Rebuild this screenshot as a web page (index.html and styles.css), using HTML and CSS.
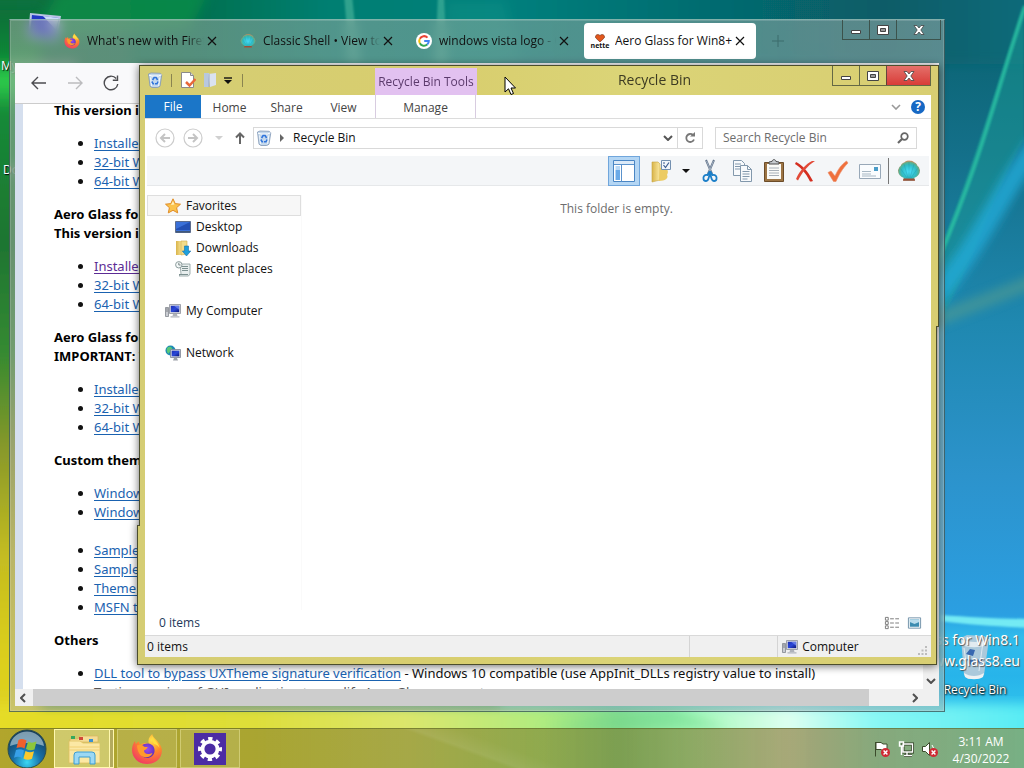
FILE: index.html
```html
<!DOCTYPE html>
<html lang="en">
<head>
<meta charset="utf-8">
<title>Desktop</title>
<link rel="stylesheet" href="styles.css">
</head>
<body>
<svg class="defs" aria-hidden="true">
  <defs>
    <linearGradient id="monBlue" x1="0" y1="0" x2="1" y2="1"><stop offset="0" stop-color="#1c2fb4"/><stop offset=".5" stop-color="#2b48d8"/><stop offset="1" stop-color="#0a1478"/></linearGradient>
    <linearGradient id="gold" x1="0" y1="0" x2="1" y2="0"><stop offset="0" stop-color="#d9b44a"/><stop offset="1" stop-color="#fbe9a0"/></linearGradient>
    <radialGradient id="fox" cx=".65" cy=".2" r=".9"><stop offset="0" stop-color="#ffe14a"/><stop offset=".45" stop-color="#ff8a2a"/><stop offset="1" stop-color="#f0306a"/></radialGradient>
    <radialGradient id="foxIn" cx=".5" cy=".4" r=".6"><stop offset="0" stop-color="#9a4cf0"/><stop offset="1" stop-color="#5a2fb8"/></radialGradient>
    <radialGradient id="shellG" cx=".5" cy=".55" r=".56"><stop offset="0" stop-color="#4ae0fa"/><stop offset=".6" stop-color="#30bcc4"/><stop offset=".8" stop-color="#5ab090"/><stop offset="1" stop-color="#f0804c"/></radialGradient>
    <symbol id="bin" viewBox="0 0 16 16"><path d="M1.500 2 4 1l9 .3 1.800 1.400-1.800 11.500-2.200 1.300H5l-2-1.300z" fill="#c4d8ec" stroke="#7f96b4" stroke-width=".8"/><path d="M2 3.200 5 4h6.500l3-1.200" fill="none" stroke="#fff"/><path d="M3.500 5.500 4.600 14M12.800 5.500 11.600 14" stroke="#f2f7fc" fill="none"/><path d="m5.600 8 1.500-2.500h2L10.600 8M11 9.500l-1 2.200H8M4.800 9.500l1.300 2.200h1" fill="none" stroke="#2f74dc" stroke-width="1.500"/></symbol>
    <symbol id="pc" viewBox="0 0 16 16"><path d="M.5 4.500h3v9h-3z" fill="#c9ccd2" stroke="#82868e" stroke-width=".8"/><path d="M1 6h2M1 8h2" stroke="#5c6068" stroke-width=".7"/><path d="M4.500 1.500h11v9h-11z" fill="#d6d8de" stroke="#8d919b" stroke-width=".8"/><path d="M5.800 2.800h8.400v6.300H5.800z" fill="url(#monBlue)"/><path d="m9 2.800 5.200 0v4z" fill="#7c92f0" opacity=".7"/><path d="M8 11h4l.5 2h-5zM5.500 13.200h9v1.300h-9z" fill="#aeb2ba"/></symbol>
    <symbol id="firefox" viewBox="0 0 32 32"><path d="M16 31C7.500 31 1 24.800 1 17c0-3.600 1.200-6.600 3-9l.8 3.200C6 9.400 7.200 8.600 8.200 8.200c-.2 1.800.4 2.800 1.200 3.400C12 10 16 9.500 18 11c-2-4.500 1.500-8.500 3.200-10C21.500 5 29 8.500 30.500 15 32.500 23 26 31 16 31z" fill="url(#fox)"/><path d="M9 17c0-4 4-7 8-6.400C22 11 24 15 23.500 18.500 23 22.500 19.500 25 16 25s-7-3-7-8z" fill="url(#foxIn)"/><path d="M6 12.500c3-1.300 6-.5 7 1.200 1 .2 2.500.1 3.700.3-.5 2-2.500 2.700-3.700 3.500 0 2 1.500 3.500 4 3.500 2 0 3-1.200 4.500-.7-1.500 3.200-5 4.700-8.500 3.700-4-1-6.500-5-7-11.500z" fill="#ff9a2c"/><path d="M21 3c1.500 4 6.500 6 7.500 12-1.700-3-4.200-4-5.500-4-1.600-2.500-2.500-5-2-8z" fill="#ffdf3e"/></symbol>
    <symbol id="shell" viewBox="0 0 24 24"><path d="M6 21.500 7 19C3 17.500.8 14.500 1 11c1-1 .8-3.500 2.700-4C4.500 4 7 4 8 2.800c2-1.300 3-.8 4-1.300 1 .5 3 0 4.500 1.300C18 4 20 4.500 20.500 7c2 .6 1.700 3 2.500 4 .2 3.500-2 6.500-6 8l1 2.500z" fill="url(#shellG)"/><path d="M12 19V3M11 19 7 5M13 19l4-14M10 19 3.500 9.500M14 19l6.500-9.500" stroke="#1c7f98" stroke-width=".6" opacity=".45" fill="none"/><path d="M6.500 19.500h11l.5 2.200H6z" fill="#9a4f38"/></symbol>
    <symbol id="glyphMin" viewBox="0 0 14 14"><path d="M2.500 7.500h9v3h-9z" fill="#fff" stroke="#444"/></symbol>
    <symbol id="glyphMax" viewBox="0 0 14 14"><path d="M1.500 2.500h11v9h-11z" fill="#fff" stroke="#444"/><path d="M4.500 5.500h5v3h-5z" fill="#999" stroke="#444"/></symbol>
    <symbol id="glyphX" viewBox="0 0 14 14"><path d="M2 2.500h3L7 5l2-2.500h3L8.800 7l3.200 4.500H9L7 9l-2 2.500H2L5.200 7z" fill="#fff" stroke="#444" stroke-width=".8"/></symbol>
    <symbol id="tabX" viewBox="0 0 10 10"><path d="m1 1 8 8M9 1 1 9" stroke="currentColor" stroke-width="1.200"/></symbol>
    <symbol id="err" viewBox="0 0 8 8"><circle cx="4" cy="4" r="4" fill="#cf2a34"/><path d="m2.300 2.300 3.400 3.400m0-3.400L2.300 5.700" stroke="#fff" stroke-width="1.300"/></symbol>
  </defs>
</svg>

<svg class="wallpaper" viewBox="0 0 1024 768" preserveAspectRatio="none" aria-hidden="true">
  <defs>
    <linearGradient id="top" x1="0" x2="1" y1="0" y2="0"><stop offset="0" stop-color="#0f713b"/><stop offset=".2" stop-color="#03704f"/><stop offset=".33" stop-color="#047f72"/><stop offset=".5" stop-color="#057f7c"/><stop offset=".68" stop-color="#066c70"/><stop offset=".85" stop-color="#075c67"/><stop offset="1" stop-color="#0a6c7c"/></linearGradient>
    <linearGradient id="left" x1="0" x2="0" y1="0" y2="1"><stop offset="0" stop-color="#106e38"/><stop offset=".06" stop-color="#0c8836"/><stop offset=".09" stop-color="#2fd04c"/><stop offset=".13" stop-color="#158a38"/><stop offset=".3" stop-color="#1e7530"/><stop offset=".44" stop-color="#358a30"/><stop offset=".56" stop-color="#87982a"/><stop offset=".7" stop-color="#c4bc20"/><stop offset=".83" stop-color="#dccf1c"/><stop offset="1" stop-color="#e2d52a"/></linearGradient>
    <linearGradient id="right" x1="0" x2="0" y1="0" y2="1"><stop offset="0" stop-color="#08606c"/><stop offset=".2" stop-color="#14708a"/><stop offset=".42" stop-color="#1f88b0"/><stop offset=".62" stop-color="#2c93cc"/><stop offset=".8" stop-color="#2b9fe2"/><stop offset=".83" stop-color="#30bcec"/><stop offset=".88" stop-color="#27b4ea"/><stop offset="1" stop-color="#40dcf0"/></linearGradient>
    <linearGradient id="bottom" x1="0" x2="1" y1="0" y2="0"><stop offset="0" stop-color="#e6dc24"/><stop offset=".25" stop-color="#dede38"/><stop offset=".4" stop-color="#dbe66c"/><stop offset=".53" stop-color="#b0ec80"/><stop offset=".6" stop-color="#84dc8c"/><stop offset=".66" stop-color="#a0f8b4"/><stop offset=".76" stop-color="#ddfff0"/><stop offset=".84" stop-color="#8af8f4"/><stop offset="1" stop-color="#52eaf4"/></linearGradient>
    <filter id="soft"><feGaussianBlur stdDeviation="6"/></filter>
    <filter id="soft2"><feGaussianBlur stdDeviation="1"/></filter>
    <filter id="soft8" x="-50%" y="-50%" width="200%" height="200%"><feGaussianBlur stdDeviation="5"/></filter>
  </defs>
  <path fill="url(#top)" d="M0 0h1024v768H0z"/>
  <path fill="url(#right)" d="M930 0h94v768H500V60h430z"/>
  <path fill="url(#top)" d="M-20-20h1064v84H-20z" filter="url(#soft)"/>
  <path fill="url(#left)" d="M-20 10H40v780h-60z" filter="url(#soft)"/>
  <path d="M60-10 210-10 190 30 30 40z" fill="#079746" opacity=".6" filter="url(#soft)"/>
  <path d="M344-5h8l7 70h-9zM438-5h6l3 70h-12z" fill="#59c0a4" opacity=".55" filter="url(#soft2)"/>
  <path d="M445 0h60l15 64h-70z" fill="#15998c" opacity=".35" filter="url(#soft)"/>
  <path d="M1024 8C995 90 975 160 940 250v70c30-50 55-130 84-180z" fill="#1c9e96" opacity=".45" filter="url(#soft2)"/>
  <path d="M1025 6C995 95 985 150 935 268" fill="none" stroke="#2cc4a4" stroke-width="4" opacity=".8" filter="url(#soft2)"/>
  <path d="M1040 140C1000 190 985 240 925 310" fill="none" stroke="#20aad8" stroke-width="20" opacity=".8" filter="url(#soft8)"/>
  <path d="M1050 275 915 328" fill="none" stroke="#5ca08c" stroke-width="14" opacity=".5" filter="url(#soft8)"/>
  <path d="M940 615c30 2 55 4 90 4v9c-35-2-60-3-90-7z" fill="#7cf2f6" opacity=".9" filter="url(#soft2)"/>
  <path fill="url(#bottom)" d="M-20 704h1064v80H-20z" filter="url(#soft)"/>
  <path d="m540 728 130-20 60 20z" fill="#6cd48c" opacity=".5" filter="url(#soft)"/>
</svg>

<div class="desktop">
  <svg class="desk-pc" viewBox="0 0 36 30" aria-hidden="true"><path d="M3 1 34 4 30 28 1 25z" fill="#b9c4e4"/><path d="M5 3 32 6 28 26 3 23z" fill="#2237c4"/><path d="m16 4 16 2-3 12z" fill="#c9dcf8"/></svg>
  <span class="desk-label label-m">My Computer</span>
  <span class="desk-label label-d">Documents</span>
  <div class="desk-bin">
    <svg viewBox="0 0 32 46" aria-hidden="true"><path d="M2 4 8 1l17 1 5 3-5 36-7 4H9l-4-4z" fill="#b9cbd9" opacity=".9"/><path d="M2 5c8 4 20 4 28 0l-2 6C20 14 10 14 3 11z" fill="#e8eef2" opacity=".9"/><path d="m7 20 4-5 5 1-2 6zM8 25l6 1 2 6-6-2zM18 26l6-2-3 7z" fill="#3768b0"/><path d="M5 39c6 4 14 4 20 0l-1 4c-4 3-14 3-18 0z" fill="#eef2f4"/><path d="M24 8 20 37M5 14l3 22" stroke="#fff" opacity=".6" fill="none"/></svg>
    <span>Recycle Bin</span>
  </div>
  <p class="watermark">Aero Glass for Win8.1<br>www.glass8.eu</p>
</div>

<section class="browser" aria-label="Firefox">
  <header class="tabstrip">
    <div class="tabs">
      <div class="tab"><svg class="fav" viewBox="0 0 32 32"><use href="#firefox"/></svg><span>What's new with Firefox</span><button aria-label="Close tab"><svg><use href="#tabX"/></svg></button></div>
      <div class="tab"><svg class="fav"><use href="#shell"/></svg><span>Classic Shell • View topic</span><button aria-label="Close tab"><svg><use href="#tabX"/></svg></button></div>
      <div class="tab"><svg class="fav" viewBox="0 0 16 16"><circle cx="8" cy="8" r="8" fill="#fff"/><g fill="none" stroke-width="2"><path d="M11.500 4.600A4.800 4.800 0 0 0 3.800 5.700" stroke="#ea4335"/><path d="M3.800 5.700a4.800 4.800 0 0 0 0 4.600" stroke="#fbbc05"/><path d="M3.800 10.300a4.800 4.800 0 0 0 7.400 1.300" stroke="#34a853"/><path d="M11.200 11.600A4.800 4.800 0 0 0 12.800 8H8.200" stroke="#4285f4"/></g></svg><span>windows vista logo - Google</span><button aria-label="Close tab"><svg><use href="#tabX"/></svg></button></div>
      <div class="tab active"><div class="nette"><svg viewBox="0 0 10 8"><path d="M5 8 .8 4C-.5 1.500 2.500-.8 5 1.500 7.500-.8 10.500 1.500 9.200 4z" fill="#e2571c" stroke="#6b2c14" stroke-width=".6"/></svg><b>nette</b></div><span>Aero Glass for Win8+</span><button aria-label="Close tab"><svg><use href="#tabX"/></svg></button></div>
      <button class="newtab" aria-label="New tab"><svg viewBox="0 0 12 12"><path d="M6 0v12M0 6h12" stroke="#3c6c6c"/></svg></button>
    </div>
    <div class="winbtns">
      <button aria-label="Minimize"><svg><use href="#glyphMin"/></svg></button><button aria-label="Maximize"><svg><use href="#glyphMax"/></svg></button><button class="wide" aria-label="Close"><svg><use href="#glyphX"/></svg></button>
    </div>
  </header>
  <div class="client">
    <nav class="navbar">
      <button aria-label="Back"><svg viewBox="0 0 16 16"><path d="M15 8H1.500M7 2 1 8l6 6" fill="none" stroke="#4c4c50" stroke-width="1.400"/></svg></button>
      <button aria-label="Forward" class="dim"><svg viewBox="0 0 16 16"><path d="M1 8h13.500M9 2l6 6-6 6" fill="none" stroke="#4c4c50" stroke-width="1.400"/></svg></button>
      <button aria-label="Reload"><svg viewBox="0 0 16 16"><path d="M13.200 3.500A6.800 6.800 0 1 0 14.800 9M14.500.5v4.700H9.800" fill="none" stroke="#4c4c50" stroke-width="1.400"/></svg></button>
    </nav>
    <div class="viewport">
      <article class="page">
        <h4>This version is for Windows 10</h4>
        <ul><li><a href="#">Installer</a></li><li><a href="#">32-bit Windows</a></li><li><a href="#">64-bit Windows</a></li></ul>
        <h4>Aero Glass for Win8.1<br>This version is for Windows 8.1</h4>
        <ul><li><a href="#" class="seen">Installer</a></li><li><a href="#">32-bit Windows</a></li><li><a href="#">64-bit Windows</a></li></ul>
        <h4>Aero Glass for Win8<br>IMPORTANT: Windows 8 only</h4>
        <ul><li><a href="#">Installer</a></li><li><a href="#">32-bit Windows</a></li><li><a href="#">64-bit Windows</a></li></ul>
        <h4>Custom themes</h4>
        <ul><li><a href="#">Windows 8 theme</a></li><li class="last"><a href="#">Windows 8.1 theme</a></li><li><a href="#">Sample theme</a></li><li><a href="#">Sample atlas</a></li><li><a href="#">Theme resources</a></li><li><a href="#">MSFN thread</a></li></ul>
        <h4>Others</h4>
        <ul><li><a href="#">DLL tool to bypass UXTheme signature verification</a> - Windows 10 compatible (use AppInit_DLLs registry value to install)</li><li><a href="#" class="plain">Testing version of GUI application to modify Aero Glass parameters</a></li></ul>
      </article>
      <div class="vbar"><svg viewBox="0 0 10 6"><path d="m1 1 4 4 4-4" fill="none" stroke="#505050" stroke-width="2"/></svg></div>
    </div>
    <div class="hbar">
      <svg viewBox="0 0 6 10"><path d="M5 1 1 5l4 4" fill="none" stroke="#505050" stroke-width="2"/></svg>
      <div class="track"><div class="thumb"></div></div>
      <svg viewBox="0 0 6 10"><path d="m1 1 4 4-4 4" fill="none" stroke="#505050" stroke-width="2"/></svg>
    </div>
  </div>
</section>

<section class="explorer" aria-label="Recycle Bin">
  <header class="titlebar">
    <div class="quick">
      <svg><use href="#bin"/></svg><i></i>
      <svg class="q-prop" viewBox="0 0 16 16"><path d="M1.500.5h9l3 3v12h-12z" fill="#fff" stroke="#8a8a8a"/><path d="M10.500.5v3h3" fill="#ddd" stroke="#8a8a8a"/><path d="m6 10 3.500 3.500L15.500 7" fill="none" stroke="#e8683a" stroke-width="2.500"/></svg>
      <svg class="q-folder" viewBox="0 0 16 16"><path d="M2 1h5v14H2z" fill="#b8c8de"/><path d="m6 2 8-1v12l-6 2z" fill="#dae2f0"/><path d="M7 2v13" stroke="#98a8c4"/></svg>
      <svg class="q-more" viewBox="0 0 8 7"><path d="M0 1h8" stroke="#111" stroke-width="1.400"/><path d="M0 3h8L4 7z" fill="#111"/></svg><i></i>
    </div>
    <span class="tooltab">Recycle Bin Tools</span>
    <h1>Recycle Bin</h1>
    <div class="winbtns">
      <button aria-label="Minimize"><svg><use href="#glyphMin"/></svg></button><button aria-label="Maximize"><svg><use href="#glyphMax"/></svg></button><button class="wide red" aria-label="Close"><svg><use href="#glyphX"/></svg></button>
    </div>
  </header>
  <div class="body">
    <nav class="ribbon">
      <button class="file">File</button><button>Home</button><button>Share</button><button>View</button><button class="manage">Manage</button>
      <span class="grow"></span>
      <svg class="chev" viewBox="0 0 10 6"><path d="m1 1 4 4 4-4" fill="none" stroke="#999" stroke-width="1.600"/></svg>
      <button class="help" aria-label="Help">?</button>
    </nav>
    <div class="address">
      <button class="round" aria-label="Back"><svg viewBox="0 0 20 20"><circle cx="10" cy="10" r="9" fill="none" stroke="#ccc" stroke-width="1.200"/><path d="M15 10H6m4-4-4 4 4 4" fill="none" stroke="#c4c4c4" stroke-width="2"/></svg></button>
      <button class="round" aria-label="Forward"><svg viewBox="0 0 20 20"><circle cx="10" cy="10" r="9" fill="none" stroke="#ccc" stroke-width="1.200"/><path d="M5 10h9m-4-4 4 4-4 4" fill="none" stroke="#c4c4c4" stroke-width="2"/></svg></button>
      <svg class="tiny" viewBox="0 0 8 4"><path d="M0 0h8L4 4z" fill="#d0d0d0"/></svg>
      <button class="up" aria-label="Up"><svg viewBox="0 0 10 12"><path d="M5 12V1.500M1 5.500l4-4 4 4" fill="none" stroke="#666" stroke-width="2"/></svg></button>
      <div class="path"><svg class="pbin"><use href="#bin"/></svg><svg class="parrow" viewBox="0 0 4 8"><path d="m0 0 4 4-4 4z" fill="#666"/></svg><span class="grow">Recycle Bin</span><svg class="chev" viewBox="0 0 10 6"><path d="m1 1 4 4 4-4" fill="none" stroke="#555" stroke-width="2"/></svg><button aria-label="Refresh"><svg viewBox="0 0 12 12"><path d="M9 3A4 4 0 1 0 10 7.500" fill="none" stroke="#777" stroke-width="1.800"/><path d="M6 4.500h5V0z" fill="#777"/></svg></button></div>
      <label class="search"><input type="text" placeholder="Search Recycle Bin" aria-label="Search Recycle Bin"><svg viewBox="0 0 12 12"><circle cx="7.500" cy="4.500" r="3.300" fill="none" stroke="#666" stroke-width="1.700"/><path d="M5 7 1 11" stroke="#666" stroke-width="2.200"/></svg></label>
    </div>
    <div class="toolbar">
      <button class="on" aria-label="Navigation pane"><svg viewBox="0 0 24 24"><path d="M1.500 1.500h21v21h-21z" fill="#fff" stroke="#4a86c4"/><path d="M2 2h20v3H2z" fill="#dceaf8"/><path d="M2 5.500h20M9.500 5.500v17" stroke="#5a92cc"/><path d="M3.500 11h4.500v10H3.500z" fill="#6aaae8"/><path d="M3.500 7H8v4H3.500z" fill="#b8d8f6"/></svg></button>
      <button aria-label="Select"><svg viewBox="0 0 24 24"><path d="M2 3h6l2 2v16l-8 2z" fill="url(#gold)" stroke="#c8a440" stroke-width=".6"/><path d="M10 9c8-2 9 4 7 7 2 3-2 6-8 6z" fill="#eccb62"/><path d="M11.500 1.500h9v9h-9z" fill="#f2f7fc" stroke="#7390b0"/><path d="m13.500 6 2 2.500L19 3.500M13 4h2" fill="none" stroke="#3c5c90" stroke-width="1.200"/></svg></button>
      <svg class="caret" viewBox="0 0 8 4"><path d="M0 0h8L4 4z" fill="#111"/></svg>
      <button aria-label="Cut"><svg viewBox="0 0 24 24"><path d="M8 1 14 15M16 1 10 15" stroke="#63748a" stroke-width="2"/><path d="M8.500 2 13 13M15.500 2 11 13" stroke="#c8d4e0" stroke-width=".6"/><path d="m11.500 13-2 3c-3-.5-4.500 1.500-4 4s4 3 5-.5l1.500-5 1.500 5c1 3.500 4.500 3 5 .5s-1-4.500-4-4l-2-3z" fill="none" stroke="#1c7fc8" stroke-width="1.800"/></svg></button>
      <button aria-label="Copy"><svg viewBox="0 0 24 24"><g fill="#f8fafc" stroke="#8298ac"><path d="M3.500 1.500h8l3 3v12h-11z"/><path d="M10.500 6.500h7l4 4v12h-11z"/><path d="M17.500 6.500v4h4M5 5h6M5 7.500h5M5 10h5M12.500 12.500h7M12.500 15h7M12.500 17.500h7M12.500 20h5" fill="none"/></g></svg></button>
      <button aria-label="Paste"><svg viewBox="0 0 24 24"><path d="M2.500 3.500h19v19h-19z" fill="#9c7444" stroke="#6c4c28"/><path d="M5 5h14v15H5z" fill="#fbfbf8"/><path d="M7 9h10M7 11.500h10M7 14h10M7 16.500h10" stroke="#a8b0b8"/><path d="M7 5V3l3-.5C10.500 0 13.500 0 14 2.500l3 .5v2z" fill="#c8ccd0" stroke="#4c4c4c"/></svg></button>
      <button aria-label="Delete"><svg viewBox="0 0 24 24"><path d="M2 3c5 2 12 9 17 19-1 .5-2 .5-3 .5C12 14 6 8 1 5z" fill="#d42e20"/><path d="M21 2C13 7 8 14 4 21.500l-2-1.500C6 11 12 5 18 2z" fill="#e24a38"/></svg></button>
      <button aria-label="Properties"><svg viewBox="0 0 24 24"><path d="M2 13.500 5 12l4 5C12 10 16 5 20.500 2L22 4C16 10 13 16 10 22.500H7.500z" fill="#f0703c" stroke="#e88c68" stroke-width=".6"/></svg></button>
      <button aria-label="Mail"><svg viewBox="0 0 24 24"><path d="M1.500 5.500h21v14h-21z" fill="#fafcfe" stroke="#98a8b8"/><path d="M16 8h4v4h-4z" fill="#4a9cc8"/><path d="M4 12.500h9M4 15h9M4 17h14" stroke="#a8b8c4"/></svg></button>
      <i></i>
      <button aria-label="Classic Shell"><svg><use href="#shell"/></svg></button>
    </div>
    <div class="panes">
      <ul class="tree">
        <li class="sel"><svg viewBox="0 0 16 16"><path d="m8 .8 2.200 4.800 5.300.6-3.900 3.500 1.100 5.200L8 12.300l-4.700 2.600 1.100-5.200L.5 6.200l5.300-.6z" fill="#fbc34c" stroke="#e08c28"/><path d="m8 3 1.400 3.500L6 7z" fill="#fff0c0"/></svg>Favorites</li>
        <li class="sub"><svg viewBox="0 0 16 16"><path d="M.5 2.500h15v11H.5z" fill="#3a70d8" stroke="#5c6c8c"/><path d="m1 10 14-7v8H1z" fill="#2350b4"/><path d="M1 12h14v1.500H1z" fill="#40587c"/></svg>Desktop</li>
        <li class="sub"><svg viewBox="0 0 16 16"><path d="M1 1h5l1 1v13H1z" fill="url(#gold)"/><path d="M6 1h6v13l-6 1z" fill="#f4dc8a" stroke="#d0ac4c" stroke-width=".6"/><path d="M9.500 6h4v5h2.300L11.500 16 7.300 11h2.200z" fill="#1f9fdc" stroke="#1870a8" stroke-width=".6"/></svg>Downloads</li>
        <li class="sub"><svg viewBox="0 0 16 16"><path d="M5 3h10v10l-1.500 2H4l2-2z" fill="#e8eeee" stroke="#8c9c9c" stroke-width=".8"/><path d="M7 5.500h6M7 7.500h6M7 9.500h6M4 13.500h9" stroke="#7c9090"/><circle cx="3.800" cy="3.800" r="3.200" fill="#f4f8f8" stroke="#8c9c9c"/><path d="M3.800 1.800v2.200h1.800" fill="none" stroke="#5c6c6c" stroke-width=".8"/></svg>Recent places</li>
        <li class="gap"><svg><use href="#pc"/></svg>My Computer</li>
        <li class="gap"><svg viewBox="0 0 16 16"><circle cx="5.500" cy="5.500" r="5" fill="#1c8ab4"/><path d="M2 3c2-2 4-1 5 0S5 6 4 8 1 6 2 3z" fill="#58c878"/><path d="M5.500 4.500h10v8h-10z" fill="#d0d4dc" stroke="#7c8494" stroke-width=".8"/><path d="M6.700 5.700h7.600v5.600H6.700z" fill="url(#monBlue)"/><path d="M9 13h3l1 2.500H8z" fill="#9ca0a8"/></svg>Network</li>
      </ul>
      <p class="empty">This folder is empty.</p>
    </div>
    <div class="details"><span class="grow">0 items</span>
      <svg viewBox="0 0 16 14"><path d="M1.500 1h3v3h-3zM1.500 5.500h3v3h-3zM1.500 10h3v3h-3z" fill="none" stroke="#777"/><path d="M6.500 2.500h4M6.500 7h4M6.500 11.500h4M12 2.500h4M12 7h4M12 11.500h4" stroke="#777"/></svg>
      <svg viewBox="0 0 16 14"><path d="M1.500 1.500h13v11h-13z" fill="#fff" stroke="#6f90a8"/><path d="M3 3h10v8H3z" fill="#3c8cb0"/><path d="M3 3h10v3L8 8 3 6z" fill="#b8dcec"/></svg>
    </div>
    <footer class="status"><span class="s1">0 items</span><span class="s2"></span><span class="s3"><svg><use href="#pc"/></svg>Computer<svg class="grip" viewBox="0 0 9 9"><path d="M7 0h2v2H7zM3.500 3.500h2v2h-2zM7 3.500h2v2H7zM0 7h2v2H0zM3.500 7h2v2h-2zM7 7h2v2H7z" fill="#bcbcbc"/></svg></span></footer>
  </div>
</section>

<footer class="taskbar">
  <button class="start" aria-label="Start"><svg viewBox="0 0 40 40"><defs><radialGradient id="orb" cx=".5" cy=".85" r=".8"><stop offset="0" stop-color="#3cd8f4"/><stop offset=".45" stop-color="#1870a8"/><stop offset="1" stop-color="#123c5c"/></radialGradient></defs><circle cx="20" cy="20" r="19" fill="url(#orb)" stroke="#2c4c4c"/><path d="M3 17C4 8 12 2.500 20 2.500S36 8 37 17c-10-4-24-4-34 0z" fill="#c4dce4" opacity=".6"/><path d="M11.500 11c3-1.500 5.500-1 8 .5l-2 8c-2.500-1.500-5-1.700-8-.5z" fill="#f0602c"/><path d="M21 12.500c2.500 1.500 5 1.500 8.500 0l-2 8c-3 1.200-5.500 1-8.500-.5z" fill="#8cc63c"/><path d="M9 21c3-1.200 5.500-1 8 .5l-2 7.500c-2.500-1.500-5-1.500-8-.3z" fill="#38a0e8"/><path d="M18.500 22c3 1.500 5.500 1.500 8.500.3l-2 7.500c-3 1.400-6 1.200-8.500-.3z" fill="#fcc92c"/></svg></button>
  <button class="task active" aria-label="File Explorer"><svg viewBox="0 0 32 32"><path d="M2 6h8l2-3h18v6H2z" fill="#f4dc94" stroke="#d8b45c" stroke-width=".7"/><path d="M3 3h4v3H3z" fill="#34a85c"/><path d="M11 4h4v3h-4z" fill="#d04838"/><path d="M21 6h4v3h-4z" fill="#3c90d0"/><path d="M1 8h11l3 2h17v20H1z" fill="#fbe8a4" stroke="#e0c060" stroke-width=".8"/><path d="M1 14h31M1 17h31" stroke="#f0d074"/><path d="M6 31v-9q0-3 3-3h15q3 0 3 3v9h-5v-7H11v7z" fill="#9cd8f4" stroke="#3c9cd0"/></svg></button>
  <button class="task" aria-label="Firefox"><svg><use href="#firefox"/></svg></button>
  <button class="task" aria-label="Aero Glass settings"><svg viewBox="0 0 30 30"><path d="M0 0h30v30H0z" fill="#4c2ca4"/><circle cx="15" cy="15" r="7" fill="none" stroke="#fff" stroke-width="3.500"/><circle cx="15" cy="15" r="9.500" fill="none" stroke="#fff" stroke-width="3.500" stroke-dasharray="4 3.460" stroke-dashoffset="2"/></svg></button>
  <span class="grow"></span>
  <div class="tray">
    <svg viewBox="0 0 16 16"><path d="M1.500 1v14.500M2 1.500h5l2 1.500h4v7H9L7 8.500H2z" fill="#fff" stroke="#3c4c2c"/><use href="#err" x="7" y="7" width="9" height="9"/></svg>
    <svg viewBox="0 0 16 16"><path d="M5 3h9.500v8H5zM9 11v3M6 14.500h8" fill="none" stroke="#2c3c20" stroke-width="3"/><path d="M5 3h9.500v8H5zM9 11v3M6 14.500h8M1.500 1h4v4h-4zM3.500 5v9" fill="none" stroke="#fff" stroke-width="1.400"/></svg>
    <svg viewBox="0 0 16 16"><path d="M.5 5.500h3l4-4v13l-4-4h-3z" fill="#fff" stroke="#3c4c2c"/><path d="M10 4q3 3 1 8" fill="none" stroke="#fff"/><use href="#err" x="7" y="7" width="9" height="9"/></svg>
  </div>
  <time>3:11 AM<br>4/30/2022</time>
</footer>

<svg class="cursor" viewBox="0 0 12 20" aria-hidden="true"><path d="M1 1v15l3.500-3.200L7 18.500l2.500-1-2.500-5.500h4.500z" fill="#fff" stroke="#000"/></svg>
</body>
</html>
```
FILE: styles.css
```css
* { box-sizing: border-box; }
html, body { height: 100%; }
body {
  margin: 0;
  position: relative;
  overflow: hidden;
  display: flex;
  flex-direction: column;
  font: 12px/16px "Open Sans", "Noto Sans", sans-serif;
  color: #111;
}
button { font: inherit; color: inherit; border: 0; padding: 0; background: none; display: flex; align-items: center; justify-content: center; }
svg { display: block; flex: none; width: 16px; height: 16px; }
h1, h4, p, ul { margin: 0; padding: 0; font-weight: inherit; }
.grow { flex: 1; }
.defs { position: absolute; width: 0; height: 0; }
.wallpaper { position: absolute; inset: 0; width: 100%; height: 100%; }

/* Desktop icons */
.desktop { flex: 1; position: relative; overflow: hidden; color: #fff; }
.desk-pc { position: absolute; left: 27px; top: 12px; width: 36px; height: 30px; }
.desk-label { position: absolute; text-shadow: 1px 1px 1px #000; white-space: nowrap; }
.label-m { left: 1px; top: 58px; }
.label-d { left: 3px; top: 162px; }
.desk-bin { position: absolute; right: 9px; top: 634px; width: 80px; display: flex; flex-direction: column; align-items: center; gap: 2px; text-shadow: 1px 1px 2px #000, 0 0 2px #000; }
.desk-bin svg { width: 32px; height: 46px; }
.watermark { position: absolute; right: 4px; top: 629px; font-family: "Noto Sans", sans-serif; font-size: 14px; line-height: 21px; text-align: right; white-space: nowrap; text-shadow: 1px 1px 1px #555; }

/* Browser window */
.browser {
  position: absolute; inset: 19px 79px 56px 9px;
  display: flex; flex-direction: column;
  padding: 0 5px 5px;
  border: 1px solid rgba(40, 70, 70, .65);
  border-top-color: rgba(160, 200, 190, .6);
  background: linear-gradient(to right, rgba(175, 175, 175, .5), rgba(155, 170, 160, .5) 50%, rgba(165, 180, 175, .5));
  box-shadow: inset 0 0 0 1px rgba(255, 255, 255, .15);
  backdrop-filter: blur(6px);
}
.tabstrip { display: flex; height: 43px; justify-content: space-between; align-items: flex-start; }
.tabs { display: flex; align-items: center; padding: 3px 0 0 41px; gap: 4px; }
.tab { display: flex; align-items: center; width: 172px; height: 36px; padding: 0 8px; border-radius: 4px; }
.tab span { flex: 1; margin-left: 7px; overflow: hidden; white-space: nowrap; mask-image: linear-gradient(to right, #000 85%, transparent); }
.tab.active span { mask-image: none; }
.tab.active { background: #fff; }
.tab button svg { width: 10px; height: 10px; margin: 3px; }
.nette { display: flex; flex-direction: column; align-items: center; width: 16px; font-size: 7px; line-height: 7px; }
.nette svg { width: 10px; height: 8px; }
.newtab { width: 36px; height: 36px; }
.newtab svg { width: 12px; height: 12px; }
.winbtns { display: flex; border: 1px solid rgba(50, 60, 50, .7); border-top: 0; height: 20px; }
.winbtns button { width: 27px; border-left: 1px solid rgba(50, 60, 50, .7); }
.winbtns button:first-child { width: 26px; border-left: 0; }
.winbtns .wide { width: 44px; }
.winbtns svg { width: 14px; height: 14px; }
.browser .winbtns { margin-right: -2px; }
.client { flex: 1; min-height: 0; display: flex; flex-direction: column; background: #fff; }
.navbar { display: flex; height: 41px; padding-left: 16px; gap: 20px; align-items: center; background: #f9f9fb; border-bottom: 1px solid #ccc; }
.dim { opacity: .35; }
.viewport { flex: 1; min-height: 0; display: flex; overflow: hidden; border-left: 8px solid #d5dfee; }
.page { flex: 1; min-width: 0; overflow: hidden; margin-top: -3px; padding-left: 31px; font-family: "Noto Sans", sans-serif; font-size: 13px; line-height: 19px; white-space: nowrap; }
.page h4 { font-weight: 700; color: #000; }
.page ul { margin: 14px 0; padding-left: 40px; }
.page .last { margin-bottom: 19px; }
.page a { color: #1a62b0; text-underline-offset: 2px; }
.page a.seen { color: #5c2c94; }
.page a.plain { color: #555; text-decoration: none; }
.vbar { width: 16px; background: #f0f0f0; display: flex; align-items: flex-end; padding: 5px 3px; }
.vbar svg { width: 10px; height: 6px; }
.hbar { height: 17px; display: flex; align-items: center; background: #f0f0f0; padding: 0 21px 0 5px; gap: 7px; }
.hbar svg { width: 6px; height: 10px; }
.track { flex: 1; height: 17px; padding-right: 36px; }
.thumb { height: 100%; background: #cdcdcd; }

/* Explorer window; the frame steps sideways partway down */
.explorer {
  position: absolute; inset: 65px 85px 103px 137px;
  display: flex; flex-direction: column;
  padding: 0 8px 8px;
  filter: drop-shadow(0 1px 4px rgba(0, 0, 0, .6));
}
.explorer::before, .explorer::after { content: ""; position: absolute; inset: 0; z-index: -1; }
.explorer::before { background: #4c4e2c; clip-path: polygon(2px 0, 100% 0, 100% 262px, calc(100% - 2px) 262px, calc(100% - 2px) 100%, 0 100%, 0 460px, 2px 460px); }
.explorer::after { background: linear-gradient(to right, #d5cd74, #d8ce6e 40%, #dbd477 60%, #d8ce72); clip-path: polygon(3px 1px, calc(100% - 1px) 1px, calc(100% - 1px) 261px, calc(100% - 3px) 261px, calc(100% - 3px) calc(100% - 1px), 1px calc(100% - 1px), 1px 461px, 3px 461px); }
.titlebar { display: grid; grid-template-columns: 230px 102px 1fr auto; height: 30px; align-items: start; }
.quick { display: flex; align-items: center; height: 30px; padding-left: 2px; gap: 6px; }
.quick i { width: 1px; height: 13px; margin: 0 2px; background: #8a8450; }
.quick .q-more { width: 8px; height: 7px; }
.quick .q-more + i { margin-left: 4px; }
.tooltab { margin-top: 3px; height: 27px; line-height: 27px; text-align: center; background: #e2c1f0; color: #5b3a6c; white-space: nowrap; }
.titlebar h1 { font-size: 14px; line-height: 30px; text-align: center; color: #3c3a22; }
.explorer .winbtns { margin-top: 1px; }
.winbtns .red { background: linear-gradient(#e4706a, #d83c38); }
.body { flex: 1; min-height: 0; display: flex; flex-direction: column; background: #fff; }
.ribbon { display: flex; align-items: stretch; height: 24px; border-bottom: 1px solid #dcdcdc; color: #444; padding-right: 6px; }
.ribbon button { width: 57px; padding-top: 2px; }
.ribbon .file { width: 56px; padding: 0; background: #1b76c8; color: #fff; }
.ribbon .manage { width: 101px; margin-left: 3px; border: solid #d8cce0; border-width: 0 1px; }
.chev { width: 10px; height: 6px; align-self: center; }
.ribbon .help { width: 14px; height: 14px; padding: 0; border-radius: 50%; background: #1668c4; color: #fff; font-weight: 700; align-self: center; margin-left: 10px; }
.address { display: flex; align-items: center; height: 37px; padding: 0 14px 0 10px; }
.round { margin-right: 8px; }
.round svg { width: 20px; height: 20px; }
.tiny { width: 8px; height: 4px; margin: 0 12px 0 4px; }
.up { margin-right: 8px; }
.up svg { width: 10px; height: 12px; }
.path { flex: 1; display: flex; align-items: center; height: 22px; border: 1px solid #d9d9d9; padding-left: 2px; }
.parrow { width: 4px; height: 8px; margin: 0 9px 0 8px; }
.path button { width: 25px; height: 20px; border-left: 1px solid #d9d9d9; margin-left: 4px; }
.path button svg { width: 12px; height: 12px; }
.search { width: 202px; display: flex; align-items: center; height: 22px; margin-left: 12px; padding: 0 7px; border: 1px solid #d9d9d9; }
.search input { flex: 1; min-width: 0; border: 0; padding: 0; font: inherit; background: none; outline: 0; }
.search input::placeholder { color: #6d6d6d; opacity: 1; }
.search svg { width: 12px; height: 12px; }
.toolbar { display: flex; align-items: center; justify-content: flex-end; height: 30px; margin: 0 2px; padding-right: 4px; background: #f4f6f8; border-bottom: 1px solid #e6e8ea; }
.toolbar button { width: 32px; height: 30px; }
.toolbar button svg { width: 24px; height: 24px; }
.toolbar .on { background: #b4d6f4; border: 1px solid #70a6dc; margin-right: 6px; }
.toolbar .caret { width: 8px; height: 4px; margin: 0 4px; }
.toolbar i { width: 1px; height: 26px; background: #777; margin: 0 4px 0 2px; }
.panes { flex: 1; display: flex; padding-top: 9px; }
.tree { width: 157px; padding-left: 2px; list-style: none; border-right: 1px solid #fafafa; }
.tree li { display: flex; align-items: center; gap: 5px; height: 21px; padding-left: 18px; white-space: nowrap; }
.tree .sub { padding-left: 28px; }
.tree .sel { background: #f7f7f7; border: 1px solid #dedede; padding-left: 17px; }
.tree .gap { margin-top: 21px; }
.empty { flex: 1; text-align: center; padding: 6px 0 0; color: #6d6d6d; }
.details { display: flex; align-items: center; gap: 8px; height: 25px; padding: 0 9px 0 14px; color: #1e395b; }
.details svg { width: 15px; height: 14px; }
.status { display: flex; height: 22px; background: #f0f0f0; border-top: 1px solid #d9d9d9; line-height: 21px; }
.s1 { flex: 546; padding-left: 2px; }
.s2 { flex: 88; border-left: 1px solid #d4d4d4; }
.s3 { flex: 150; display: flex; align-items: center; gap: 4px; padding-left: 4px; border-left: 1px solid #d4d4d4; }
.grip { width: 9px; height: 9px; margin: 8px 4px 0 auto; }

/* Taskbar */
.taskbar { position: relative; height: 40px; display: flex; align-items: stretch; background: linear-gradient(to right, rgba(125, 110, 50, .5), rgba(110, 105, 30, .5) 50%, rgba(125, 95, 20, .55) 80%, rgba(150, 115, 20, .5)); border-top: 1px solid rgba(80, 90, 30, .5); color: #fff; }
.taskbar::before { content: ""; position: absolute; inset: 0; background: linear-gradient(20deg, transparent 45%, rgba(255, 255, 255, .07) 46%, transparent 50%); }
.start { margin: 0 7px; width: 40px; }
.start svg { width: 40px; height: 40px; }
.task { width: 60px; margin-right: 3px; border: 1px solid rgba(230, 225, 150, .55); background: rgba(255, 255, 255, .12); }
.task svg { width: 32px; height: 32px; }
.task.active { background: rgba(255, 255, 200, .4); border: 1px solid #fff8b0; box-shadow: inset -4px 0 0 -1px rgba(130, 120, 40, .6), inset -5px 0 0 -1px #fff8b0; }
.tray { display: flex; align-items: center; gap: 8px; margin-right: 10px; }
.taskbar time { width: 66px; margin-right: 10px; padding-top: 4px; line-height: 17px; text-align: center; }
.cursor { position: absolute; left: 504px; top: 76px; width: 12px; height: 20px; }
```
